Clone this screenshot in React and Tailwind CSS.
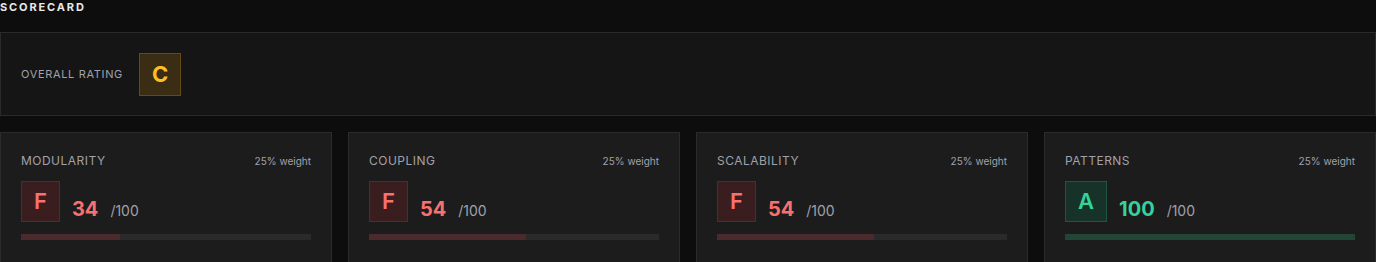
const categories = [
  { name: "MODULARITY", grade: "F", score: 34 },
  { name: "COUPLING", grade: "F", score: 54 },
  { name: "SCALABILITY", grade: "F", score: 54 },
  { name: "PATTERNS", grade: "A", score: 100 },
];

const gradeStyles = {
  F: {
    badge: "bg-[#3a1e1f] border-[#5e2628] text-[#f87171]",
    score: "text-[#f87171]",
    bar: "bg-[#4a2a2c]",
  },
  A: {
    badge: "bg-[#173229] border-[#1f5640] text-[#34d399]",
    score: "text-[#34d399]",
    bar: "bg-[#234536]",
  },
};

function CategoryCard({ item }) {
  const styles = gradeStyles[item.grade];

  return (
    <div className="bg-[#1c1c1c] border border-[#2a2a2a] px-5 pt-5 pb-6">
      <div className="flex justify-between items-center h-4">
        <span className="text-[12px] tracking-[0.04em] text-[#a1a1aa]">
          {item.name}
        </span>
        <span className="text-[10px] text-[#a1a1aa]">25% weight</span>
      </div>

      <div className="flex items-end gap-3 mt-3">
        <div
          className={`px-3 h-[41px] border flex items-center justify-center text-[22px] font-semibold ${styles.badge}`}
        >
          {item.grade}
        </div>
        <div className="flex items-baseline gap-[12px] -mb-[1px]">
          <span className={`text-[20px] font-bold leading-7 ${styles.score}`}>
            {item.score}
          </span>
          <span className="text-[14px] text-[#a1a1aa] leading-5">/100</span>
        </div>
      </div>

      <div className="mt-3 h-1.5 bg-[#2a2a2a]">
        <div className={`h-full ${styles.bar}`} style={{ width: `${item.score}%` }} />
      </div>
    </div>
  );
}

export default function App() {
  return (
    <div
      className="min-h-screen bg-[#0d0d0d] overflow-hidden"
      style={{ fontFamily: "Inter, 'Noto Sans', sans-serif" }}
    >
      <h2 className="text-[11px] font-bold tracking-[0.17em] text-[#e8e8e8] leading-[15px] h-8">
        SCORECARD
      </h2>

      {/* Overall */}
      <div className="bg-[#151515] border border-[#2a2a2a] h-[84px] flex items-center px-5 gap-4">
        <span className="text-[11px] tracking-[0.06em] text-[#a1a1aa]">
          OVERALL RATING
        </span>
        <div className="px-3 h-[43px] border border-[#654a14] bg-[#3a2d14] flex items-center justify-center text-[22px] font-bold text-[#fbbf24]">
          C
        </div>
      </div>

      {/* Categories */}
      <div className="grid grid-cols-4 gap-4 mt-4">
        {categories.map((item) => (
          <CategoryCard key={item.name} item={item} />
        ))}
      </div>
    </div>
  );
}
